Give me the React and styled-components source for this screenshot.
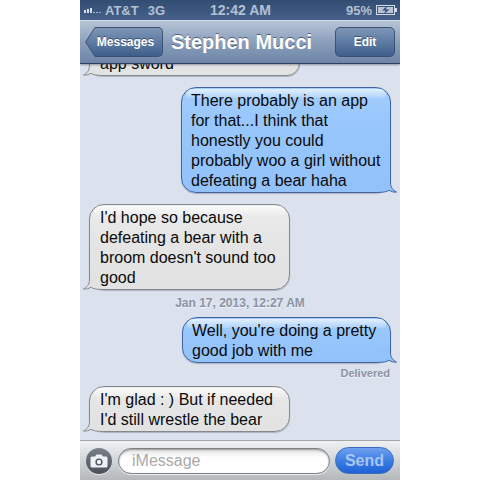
import React from 'react';
import styled, { createGlobalStyle } from 'styled-components';

const Global = createGlobalStyle`
	html, body {
		margin: 0;
		background: #fff;
		font-family: 'Liberation Sans', Arial, sans-serif;
	}
`;

const Phone = styled.div`
	width: 320px;
	height: 480px;
	margin: 0 auto;
	display: flex;
	flex-direction: column;
	overflow: hidden;
	background: #dbe2ed;
`;

const StatusBar = styled.div`
	height: 20px;
	flex: none;
	display: grid;
	grid-template-columns: 1fr auto 1fr;
	align-items: center;
	padding: 0 3px 0 4px;
	background: linear-gradient(#324d72, #45618a);
	color: #b4c0d2;
	font-size: 13px;
	font-weight: 700;
`;

const StatusSide = styled.div`
	display: flex;
	align-items: center;
	justify-content: ${(p) => (p.$end ? 'flex-end' : 'flex-start')};
	gap: ${(p) => p.$gap}px;
`;

const Carrier = styled.span`
	margin-right: 6px;
`;

const Clock = styled.span`
	font-size: 14px;
`;

const NavBar = styled.div`
	height: 44px;
	flex: none;
	box-sizing: border-box;
	display: flex;
	align-items: center;
	padding: 0 5px;
	border-top: 1px solid #d5dde8;
	border-bottom: 1px solid #2d3f5e;
	background: linear-gradient(#b7c4d7, #8b9fbb 50%, #6d85a7);
	box-shadow: 0 1px 2px rgba(40, 50, 70, 0.45);
	position: relative;
	z-index: 1;
`;

const BackButton = styled.div`
	position: relative;
	flex: none;
	height: 30px;
	width: 68px;
	margin-left: 10px;
	box-sizing: border-box;
	display: flex;
	align-items: center;
	justify-content: center;
	padding-right: 6px;
	border: 1px solid #3b5273;
	border-left: none;
	border-radius: 0 5px 5px 0;
	background: linear-gradient(#7f96b6, #5d7ba3 50%, #3f5e8b);
	color: #fff;
	font-size: 12px;
	font-weight: 700;
	text-shadow: 0 -1px 0 rgba(30, 45, 70, 0.6);
`;

const BackTip = styled.svg`
	position: absolute;
	left: -10px;
	top: -1px;
`;

const Title = styled.div`
	flex: 1;
	text-align: center;
	color: #fff;
	font-size: 20px;
	font-weight: 700;
	padding-right: 15px;
	text-shadow: 0 -1px 0 rgba(30, 45, 70, 0.6);
	white-space: nowrap;
`;

const EditButton = styled.div`
	flex: none;
	width: 60px;
	height: 30px;
	box-sizing: border-box;
	display: flex;
	align-items: center;
	justify-content: center;
	border: 1px solid #3b5273;
	border-radius: 5px;
	background: linear-gradient(#7f96b6, #5d7ba3 50%, #3f5e8b);
	color: #fff;
	font-size: 12px;
	font-weight: 700;
	text-shadow: 0 -1px 0 rgba(30, 45, 70, 0.6);
`;

const Messages = styled.div`
	flex: 1;
	min-height: 0;
	display: flex;
	flex-direction: column;
	justify-content: flex-end;
	overflow: hidden;
	padding: 0 9px 8px;
`;

const Bubble = styled.div`
	position: relative;
	flex: none;
	box-sizing: border-box;
	width: ${(p) => p.$width}px;
	margin-top: ${(p) => p.$top || 0}px;
	align-self: ${(p) => (p.$sent ? 'flex-end' : 'flex-start')};
	padding: 3px 4px 1px ${(p) => (p.$sent ? 9 : 10)}px;
	border: 1px solid ${(p) => (p.$sent ? '#3f649f' : '#85888c')};
	border-radius: 15px;
	background: ${(p) =>
		p.$sent
			? 'linear-gradient(#a2ccfc, #97c6fc 40%, #93c2fb)'
			: 'linear-gradient(#ececec, #e5e5e5 40%, #e2e2e2)'};
	box-shadow: 0 1px 1px rgba(80, 90, 110, 0.35);
	color: #0a0a0a;
	font-size: 16px;
	line-height: 20px;

	&::before {
		content: '';
		position: absolute;
		top: 1px;
		left: 4px;
		right: 4px;
		height: 9px;
		border-radius: 10px 10px 5px 5px;
		background: linear-gradient(rgba(255, 255, 255, 0.7), rgba(255, 255, 255, 0.15));
	}
`;

const BubbleText = styled.span`
	position: relative;
`;

const Tail = styled.svg`
	position: absolute;
	bottom: -1px;
	${(p) => (p.$sent ? 'right: -7px; transform: scaleX(-1);' : 'left: -7px;')}
`;

const Stamp = styled.div`
	flex: none;
	margin-top: ${(p) => p.$top}px;
	text-align: center;
	color: #8b93a3;
	font-size: 12px;
	font-weight: 700;
	line-height: 13px;
	text-shadow: 0 1px 0 rgba(255, 255, 255, 0.6);
`;

const Delivered = styled(Stamp)`
	text-align: right;
	padding-right: 1px;
	font-size: 11px;
`;

const InputBar = styled.div`
	height: 40px;
	flex: none;
	box-sizing: border-box;
	display: flex;
	align-items: center;
	gap: 5px;
	padding: 0 6px;
	border-top: 1px solid #a3a5a8;
	background: linear-gradient(#eef0f2, #d3d6d9 50%, #b5b8bb);
`;

const CameraButton = styled.div`
	width: 26px;
	height: 26px;
	flex: none;
	margin-right: 1px;
	display: flex;
	align-items: center;
	justify-content: center;
	border-radius: 50%;
	background: linear-gradient(#7b818b, #4a505b);
	box-shadow: 0 1px 0 rgba(255, 255, 255, 0.7);
`;

const InputField = styled.div`
	flex: 1;
	height: 26px;
	box-sizing: border-box;
	display: flex;
	align-items: center;
	padding-left: 13px;
	border: 1px solid #7e8084;
	border-radius: 13px;
	background: linear-gradient(#e2e2e2, #fff 35%);
	box-shadow: inset 0 1px 2px rgba(0, 0, 0, 0.35), 0 1px 0 rgba(255, 255, 255, 0.7);
	color: #a9a9a9;
	font-size: 16px;
`;

const SendButton = styled.div`
	width: 59px;
	height: 27px;
	flex: none;
	box-sizing: border-box;
	display: flex;
	align-items: center;
	justify-content: center;
	border: 1px solid #3a6cbd;
	border-radius: 14px;
	background: linear-gradient(#6fa0ee, #3d7de3 50%, #1f62d6);
	color: #a9c6f2;
	font-size: 16px;
	font-weight: 700;
`;

function SignalBars() {
	return (
		<svg width="18" height="8" viewBox="0 0 18 8" fill="#d6deea">
			<rect x="0" y="4" width="2" height="3" />
			<rect x="3" y="3" width="2" height="4" />
			<rect x="6" y="2" width="2" height="5" />
			<rect x="9" y="6" width="2" height="1" opacity="0.7" />
			<rect x="12" y="6" width="2" height="1" opacity="0.7" />
			<rect x="15" y="6" width="2" height="1" opacity="0.7" />
		</svg>
	);
}

function Battery() {
	return (
		<svg width="21" height="10" viewBox="0 0 21 10">
			<rect x="0.5" y="0.5" width="18" height="9" fill="none" stroke="#d3dbe6" />
			<rect x="19" y="3" width="2" height="4" fill="#d3dbe6" />
			<rect x="2" y="2" width="15" height="6" fill="#b9c5d6" />
			<path d="M11 1 L6 5.5 H9.5 L8 9 L13.5 4.5 H10 Z" fill="#34507a" />
		</svg>
	);
}

function BubbleTail({ sent }) {
	const fill = sent ? '#93c2fb' : '#e2e2e2';
	const line = sent ? '#3f649f' : '#85888c';
	return (
		<Tail $sent={sent} width="22" height="20" viewBox="0 0 22 20">
			<path
				d="M6.500 3 V10 C6.500 14 4 17.500 0.500 19 C3 19.500 6 18.500 8 17.200 C10 18.800 14 19.500 22 19.500 V3 Z"
				fill={fill}
			/>
			<path
				d="M6.500 3 V10 C6.500 14 4 17.500 0.500 19 C3 19.500 6 18.500 8 17.200 C10 18.800 14 19.500 22 19.500"
				fill="none"
				stroke={line}
			/>
		</Tail>
	);
}

function Message({ sent, width, top, children }) {
	return (
		<Bubble $sent={sent} $width={width} $top={top}>
			<BubbleTail sent={sent} />
			<BubbleText>{children}</BubbleText>
		</Bubble>
	);
}

export default function App() {
	return (
		<>
			<Global />
			<Phone>
				<StatusBar>
					<StatusSide $gap={3}>
						<SignalBars />
						<Carrier>AT&amp;T</Carrier>
						<span>3G</span>
					</StatusSide>
					<Clock>12:42 AM</Clock>
					<StatusSide $end $gap={4}>
						<span>95%</span>
						<Battery />
					</StatusSide>
				</StatusBar>
				<NavBar>
					<BackButton>
						<BackTip width="11" height="30" viewBox="0 0 11 30">
							<defs>
								<linearGradient id="tip" x1="0" y1="0" x2="0" y2="1">
									<stop offset="0" stopColor="#7f96b6" />
									<stop offset="0.5" stopColor="#5d7ba3" />
									<stop offset="1" stopColor="#3f5e8b" />
								</linearGradient>
							</defs>
							<path d="M11 0.500 H10 L0.700 15 L10 29.500 H11 Z" fill="url(#tip)" stroke="#3b5273" strokeWidth="1" />
							<rect x="10" y="1" width="1" height="28" fill="url(#tip)" />
						</BackTip>
						Messages
					</BackButton>
					<Title>Stephen Mucci</Title>
					<EditButton>Edit</EditButton>
				</NavBar>
				<Messages>
					<Message width={211}>app sword</Message>
					<Message sent width={210} top={11}>
						There probably is an app for that...I think that honestly you could probably woo a girl without defeating a bear haha
					</Message>
					<Message width={201} top={11}>
						I'd hope so because defeating a bear with a broom doesn't sound too good
					</Message>
					<Stamp $top={7}>Jan 17, 2013, 12:27 AM</Stamp>
					<Message sent width={209} top={7}>
						Well, you're doing a pretty good job with me
					</Message>
					<Delivered $top={4}>Delivered</Delivered>
					<Message width={201} top={6}>
						I'm glad : ) But if needed I'd still wrestle the bear
					</Message>
				</Messages>
				<InputBar>
					<CameraButton>
						<svg width="18" height="14" viewBox="0 0 18 14">
							<path
								d="M2 2.500 H5 L6.500 0.500 H11.500 L13 2.500 H16 Q17.500 2.500 17.500 4 V12 Q17.500 13.500 16 13.500 H2 Q0.500 13.500 0.500 12 V4 Q0.500 2.500 2 2.500 Z"
								fill="#eef1f5"
							/>
							<circle cx="9" cy="8" r="3.600" fill="#4b515c" />
							<circle cx="9" cy="8" r="2.200" fill="#eef1f5" />
						</svg>
					</CameraButton>
					<InputField>iMessage</InputField>
					<SendButton>Send</SendButton>
				</InputBar>
			</Phone>
		</>
	);
}
